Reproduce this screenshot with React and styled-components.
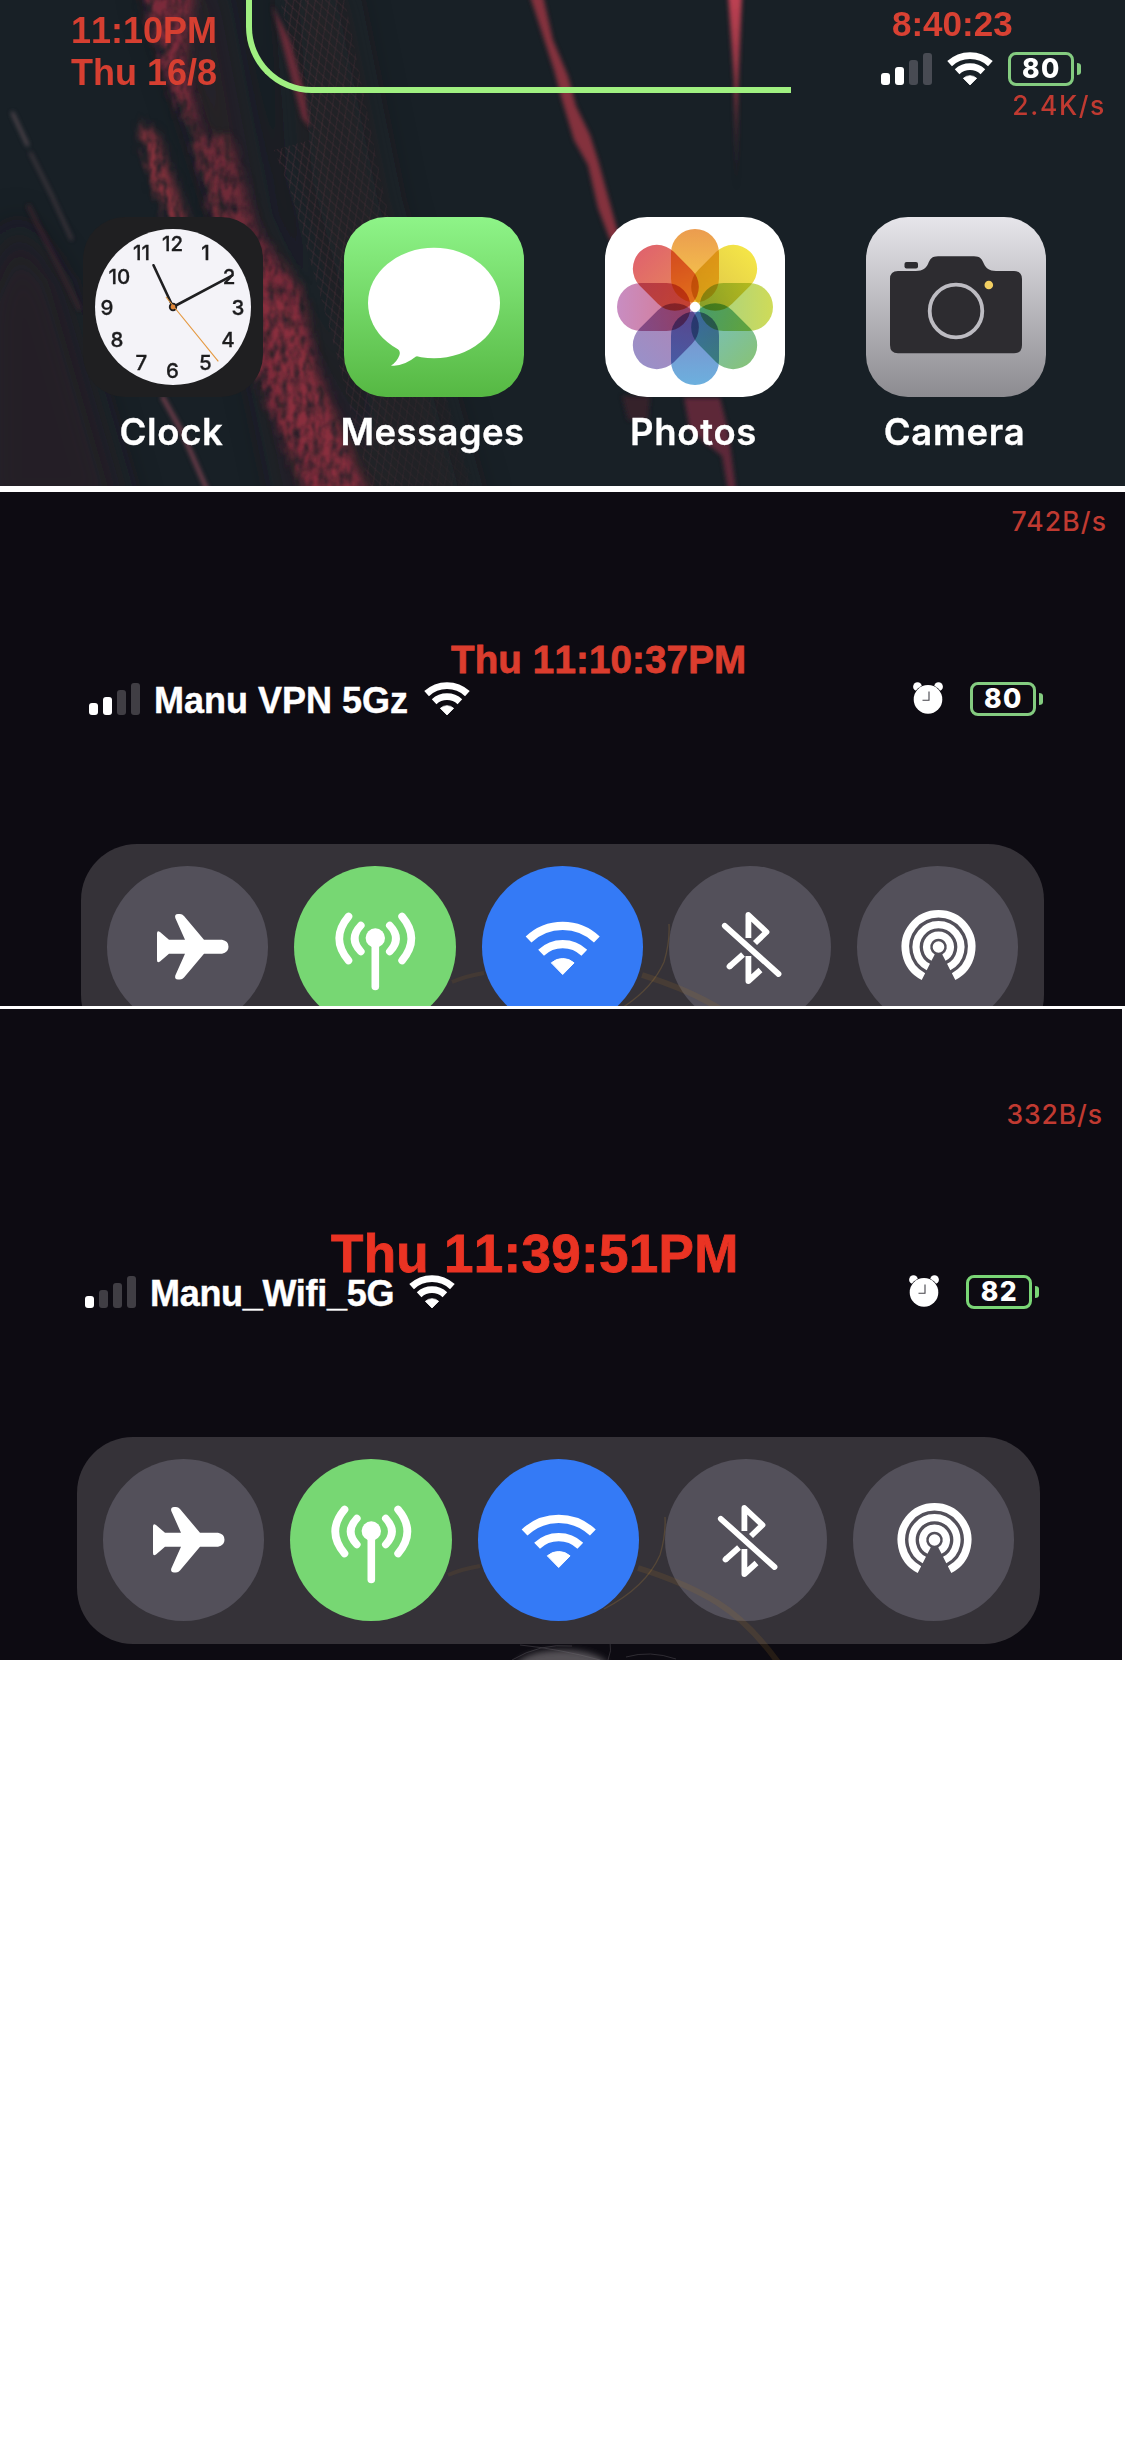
import React from "react";
import styled, { createGlobalStyle } from "styled-components";

const GlobalStyle = createGlobalStyle`
  html, body { margin: 0; padding: 0; background: #ffffff; }
  * { box-sizing: border-box; }
`;

const SANS = `"Liberation Sans", Arial, sans-serif`;
const UI = `Inter, "Noto Sans", sans-serif`;

const Page = styled.main`
  width: 1125px;
  min-height: 2440px;
  display: flex;
  flex-direction: column;
  background: #ffffff;
  font-kerning: none;
`;

const Screen = styled.section`
  position: relative;
  isolation: isolate;
  overflow: hidden;
  width: ${(p) => p.$width}px;
  height: ${(p) => p.$height}px;
  margin-bottom: ${(p) => p.$after || 0}px;
  background: ${(p) => p.$bg};
`;

const Backdrop = styled.svg`
  position: absolute;
  inset: 0;
  z-index: -1;
  display: block;
`;

const TopBar = styled.header`
  display: flex;
  align-items: flex-start;
  height: 217px;
`;

const DateBlock = styled.div`
  width: 246px;
  padding: 10px 0 0 42px;
  text-align: center;
  font: 700 36px/42px ${SANS};
  font-kerning: none;
  color: #d63f31;
`;

const DateLine = styled.div`
  width: 204px;
`;

const NotchOutline = styled.div`
  width: 545px;
  height: 93px;
  border: solid #a0f081;
  border-width: 0 0 6px 6px;
  border-bottom-left-radius: 66px;
`;

const StatusCorner = styled.div`
  flex: 1;
  display: flex;
  flex-direction: column;
  padding: 4px 20px 0 90px;
`;

const CornerTime = styled.div`
  height: 40px;
  padding-left: 11px;
  font: 700 35px/40px ${SANS};
  color: #d84133;
`;

const CornerIcons = styled.div`
  display: flex;
  align-items: flex-start;
  margin-top: 8px;
  height: 34px;
`;

const Gap = styled.span`
  flex: 0 0 ${(p) => p.$w}px;
`;

const Rate = styled.div`
  align-self: flex-end;
  height: 26px;
  margin-top: ${(p) => p.$top}px;
  margin-right: ${(p) => p.$right || 0}px;
  font: 500 26.5px/26px ${UI};
  letter-spacing: ${(p) => p.$spacing}px;
  color: #c03a31;
  white-space: nowrap;
`;

const Bars = styled.div`
  flex: none;
  display: flex;
  align-items: flex-end;
  gap: 5px;
  height: 33px;
`;

const Bar = styled.i`
  width: 9px;
  height: ${(p) => p.$h}px;
  border-radius: 3px;
  background: ${(p) => (p.$on ? "#ffffff" : p.$dim)};
`;

const Battery = styled.div`
  flex: none;
  display: flex;
  align-items: center;
  height: 34px;
`;

const BatteryCase = styled.div`
  width: 66px;
  height: 34px;
  border: 3px solid ${(p) => p.$color};
  border-radius: 8px;
  text-align: center;
  font: 800 26.5px/27px ${UI};
  letter-spacing: 1.6px;
  text-indent: 1px;
  color: #ffffff;
`;

const BatteryNub = styled.i`
  width: 4px;
  height: 12px;
  margin-left: 3px;
  border-radius: 0 8px 8px 0 / 0 6px 6px 0;
  background: ${(p) => p.$color};
`;

const Glyph = styled.svg`
  display: block;
  flex: none;
  overflow: visible;
`;

const Dock = styled.div`
  display: grid;
  grid-template-columns: repeat(4, 180px);
  column-gap: 81px;
  padding-left: 83px;
`;

const DockApp = styled.div`
  display: flex;
  flex-direction: column;
  align-items: center;
`;

const AppName = styled.span`
  margin-top: 14px;
  margin-left: -3px;
  font: 600 36.5px/42px ${UI};
  letter-spacing: ${(p) => p.$spacing || 0.7}px;
  -webkit-text-stroke: 0.3px #ffffff;
  white-space: nowrap;
  color: #ffffff;
`;

const CenterColumn = styled.div`
  display: flex;
  flex-direction: column;
`;

const BigTime = styled.div`
  margin-top: ${(p) => p.$top}px;
  margin-left: ${(p) => p.$left}px;
  height: ${(p) => p.$lh}px;
  font: 700 ${(p) => p.$size}px/${(p) => p.$lh}px ${SANS};
  font-kerning: none;
  letter-spacing: ${(p) => p.$spacing || 0}px;
  -webkit-text-stroke: 0.8px ${(p) => p.$color};
  color: ${(p) => p.$color};
  white-space: nowrap;
`;

const StatusRow = styled.div`
  display: flex;
  align-items: flex-start;
  height: 34px;
  margin-top: ${(p) => p.$top}px;
  padding-left: ${(p) => p.$left}px;
`;

const NetworkName = styled.div`
  flex: none;
  width: ${(p) => p.$w}px;
  padding-left: 1px;
  margin-left: 13px;
  font: 700 36px/37px ${SANS};
  letter-spacing: ${(p) => p.$spacing || 0}px;
  -webkit-text-stroke: 0.4px #ffffff;
  color: #ffffff;
  white-space: nowrap;
`;

const Tile = styled.div`
  display: flex;
  gap: 26px;
  width: 963px;
  height: 207px;
  margin: 128px 0 0 ${(p) => p.$left}px;
  padding: 22px 25.5px;
  border-radius: 56px;
  background: #353238;
`;

const Toggle = styled.div`
  flex: none;
  width: 161.5px;
  height: 162px;
  border-radius: 50%;
  background: ${(p) => p.$color};
`;

const Strands = styled.svg`
  position: absolute;
  inset: 0;
  display: block;
`;

function Signal({ on, dim }) {
  return (
    <Bars>
      {[12, 18, 25, 32].map((h, i) => (
        <Bar key={h} $h={h} $on={i < on} $dim={dim} />
      ))}
    </Bars>
  );
}

function wedge(cx, cy, r, deg) {
  const a = (deg * Math.PI) / 180;
  const dx = r * Math.sin(a);
  const dy = r * Math.cos(a);
  return `${cx - dx} ${cy - dy} A${r} ${r} 0 0 1 ${cx + dx} ${cy - dy}`;
}

function Wifi() {
  return (
    <Glyph width="46" height="34" viewBox="0 0 46 34">
      <g fill="none" stroke="#fff">
        <path d={`M${wedge(23, 33.5, 29.9, 43)}`} strokeWidth="6.9" />
        <path d={`M${wedge(23, 33.5, 18.9, 43)}`} strokeWidth="6.8" />
      </g>
      <path
        d={`M23 33 L${wedge(23, 33.5, 9.8, 43)} Z`}
        fill="#fff"
        stroke="#fff"
        strokeWidth=".8"
        strokeLinejoin="round"
      />
    </Glyph>
  );
}

function Alarm() {
  return (
    <Glyph width="30" height="32" viewBox="0 0 30 32">
      <circle cx="4.500" cy="4.700" r="4.400" fill="#fff" />
      <circle cx="25.500" cy="4.700" r="4.400" fill="#fff" />
      <circle cx="15" cy="17.300" r="14.900" fill="#0d0b12" />
      <circle cx="15" cy="17.400" r="14.300" fill="#fff" />
      <path d="M16 9.500V18.300H9.500" fill="none" stroke="#44434a" strokeWidth="1.100" />
    </Glyph>
  );
}

function BatteryLevel({ level, color = "#84cc80" }) {
  return (
    <Battery>
      <BatteryCase $color={color}>{level}</BatteryCase>
      <BatteryNub $color={color} />
    </Battery>
  );
}

const numerals = [
  [12, 88.5, 26.7], [1, 121.4, 35.7], [2, 145, 59.7], [3, 153.9, 90],
  [4, 144, 122], [5, 121.4, 145], [6, 88.5, 153.7], [7, 57.4, 145],
  [8, 33, 122], [9, 23, 90], [10, 35.3, 59.7], [11, 57.4, 35.7],
];

function ClockIcon() {
  return (
    <Glyph width="180" height="180" viewBox="0 0 180 180">
      <rect width="180" height="180" rx="42" fill="#1f1f21" />
      <circle cx="90" cy="90" r="78" fill="#f4f3f8" />
      <g fontFamily="Inter, sans-serif" fontSize="20.500" fontWeight="500" fill="#1c1c1e" stroke="#1c1c1e" strokeWidth=".3" textAnchor="middle">
        {numerals.map(([n, x, y]) => (
          <text key={n} x={x + 1} y={y + 7.5}>{n}</text>
        ))}
      </g>
      <g stroke="#1f1f21" strokeLinecap="round">
        <path d="M90 90L70.500 48.300" strokeWidth="2.600" />
        <path d="M90 90L149.400 58.400" strokeWidth="2.600" />
      </g>
      <circle cx="90" cy="90" r="4.200" fill="#1f1f21" />
      <path d="M83 80L135.300 144.300" stroke="#e5983f" strokeWidth="1.100" />
      <circle cx="90" cy="90" r="2.400" fill="#e0873a" />
    </Glyph>
  );
}

function MessagesIcon() {
  return (
    <Glyph width="180" height="180" viewBox="0 0 180 180">
      <defs>
        <linearGradient id="msg" x1="0" y1="0" x2="0" y2="1">
          <stop offset="0" stopColor="#8ef488" />
          <stop offset="1" stopColor="#56b843" />
        </linearGradient>
      </defs>
      <rect width="180" height="180" rx="42" fill="url(#msg)" />
      <ellipse cx="90" cy="86" rx="66" ry="55.300" fill="#fff" />
      <path d="M52 130Q57 134 55.500 138Q53 145 47 148.500Q59 150 72 139.600Q80 137 80 132L60 122Z" fill="#fff" />
    </Glyph>
  );
}

const petals = [
  ["#eb9c4f", "#f8d04b"], ["#f4e547", "#dcc24a"], ["#cfdb58", "#9fd08c"],
  ["#86c27c", "#74bfc8"], ["#6cb0de", "#8087c8"], ["#9a90c8", "#b184b4"],
  ["#c88dc2", "#d8788c"], ["#e0646c", "#e88a58"],
];

function PhotosIcon() {
  return (
    <Glyph width="180" height="180" viewBox="0 0 180 180">
      <defs>
        {petals.map(([a, b], i) => (
          <linearGradient key={i} id={`petal${i}`} x1="0" y1="0" x2="0" y2="1">
            <stop offset="0" stopColor={a} />
            <stop offset="1" stopColor={b} />
          </linearGradient>
        ))}
      </defs>
      <rect width="180" height="180" rx="42" fill="#fff" />
      <g style={{ isolation: "isolate" }}>
        {petals.map((_, i) => (
          <rect
            key={i}
            x="66" y="12" width="48" height="73.500" rx="24"
            fill={`url(#petal${i})`}
            transform={`rotate(${i * 45} 90 90)`}
            style={{ mixBlendMode: "multiply" }}
          />
        ))}
      </g>
      <circle cx="90" cy="90" r="5" fill="#fff" />
    </Glyph>
  );
}

function CameraIcon() {
  return (
    <Glyph width="180" height="180" viewBox="0 0 180 180">
      <defs>
        <linearGradient id="cam" x1="0" y1="0" x2="0" y2="1">
          <stop offset="0" stopColor="#e6e5ea" />
          <stop offset="1" stopColor="#8c8b90" />
        </linearGradient>
      </defs>
      <rect width="180" height="180" rx="42" fill="url(#cam)" />
      <rect x="38.500" y="45" width="13.500" height="6.400" rx="2" fill="#2d2c30" />
      <path
        d="M32 54H50C57 54 60 51 62 47C64 42 66 39.300 72 39.300H108C114 39.300 116 42 118 47C120 51 123 54 130 54H148Q156 54 156 62V128Q156 136.300 148 136.300H32Q24 136.300 24 128V62Q24 54 32 54Z"
        fill="#2d2c30"
      />
      <circle cx="90" cy="94" r="26.300" fill="none" stroke="#bdbcc2" strokeWidth="3.800" />
      <circle cx="122.800" cy="68" r="4.300" fill="#f2cf62" />
    </Glyph>
  );
}

function AirplaneGlyph() {
  return (
    <Glyph width="162" height="162" viewBox="0 0 162 162">
      <path
        d="M53 66L62 73.800H78L68.300 52Q67.300 48.200 71 48H73Q75.300 48 77 50L97 73.800H115Q121.500 75 121.500 80.800T115 87.800H97L77 111.500Q75.300 113.600 73 113.600H71Q67.300 113.400 68.300 109.600L78 87.800H62L53 95.600Q50 97.500 50 94V67.600Q50 64 53 66Z"
        fill="#fff"
      />
    </Glyph>
  );
}

function AntennaGlyph() {
  return (
    <Glyph width="162" height="162" viewBox="0 0 162 162">
      <circle cx="81.300" cy="72" r="9.700" fill="#fff" />
      <g fill="none" stroke="#fff" strokeWidth="7.600" strokeLinecap="round">
        <path d="M81.300 76V120.500" />
        <path d="M66.800 59.500Q54.500 72.500 66.800 85.500" />
        <path d="M95.800 59.500Q108.100 72.500 95.800 85.500" />
        <path d="M54.500 50.500Q36 72.500 54.500 94.500" />
        <path d="M108.100 50.500Q126.600 72.500 108.100 94.500" />
      </g>
    </Glyph>
  );
}

function WifiGlyph() {
  return (
    <Glyph width="162" height="162" viewBox="0 0 162 162">
      <g fill="none" stroke="#fff">
        <path d={`M${wedge(80.7, 109.5, 49.6, 43.5)}`} strokeWidth="8.400" />
        <path d={`M${wedge(80.7, 109.5, 31.4, 43.5)}`} strokeWidth="8.400" />
      </g>
      <path
        d={`M80.700 108.500L${wedge(80.7, 109.5, 17, 42)}Z`}
        fill="#fff"
        stroke="#fff"
        strokeWidth="1"
        strokeLinejoin="round"
      />
    </Glyph>
  );
}

function BluetoothOffGlyph() {
  return (
    <Glyph width="162" height="162" viewBox="0 0 162 162">
      <g fill="none" stroke="#fff" strokeWidth="5.800" strokeLinejoin="round">
        <path d="M79.400 72V49L97.500 66L86 77" />
        <path d="M79.400 90V115L91.500 104" />
        <path d="M60.500 100.500L74 88.500" />
        <path d="M60.500 100.500L61 100" strokeLinecap="round" />
        <path d="M55.800 59.800L109.500 108" strokeLinecap="round" />
      </g>
    </Glyph>
  );
}

function arcGap(r) {
  const a = (27 * Math.PI) / 180;
  const x = r * Math.sin(a);
  const y = r * Math.cos(a);
  return `M${81.5 - x} ${81 + y}A${r} ${r} 0 1 1 ${81.5 + x} ${81 + y}`;
}

function AirDropGlyph() {
  return (
    <Glyph width="162" height="162" viewBox="0 0 162 162">
      <circle cx="81.500" cy="81" r="5.800" fill="#fff" />
      <g fill="none" stroke="#fff">
        <path d={arcGap(11.9)} strokeWidth="7.200" />
        <path d={arcGap(22.4)} strokeWidth="7.200" />
        <path d={arcGap(33.2)} strokeWidth="7.600" />
      </g>
    </Glyph>
  );
}

function ControlTile({ left }) {
  return (
    <Tile $left={left}>
      <Toggle $color="#53505a"><AirplaneGlyph /></Toggle>
      <Toggle $color="#77d773"><AntennaGlyph /></Toggle>
      <Toggle $color="#347af6"><WifiGlyph /></Toggle>
      <Toggle $color="#53505a"><BluetoothOffGlyph /></Toggle>
      <Toggle $color="#53505a"><AirDropGlyph /></Toggle>
    </Tile>
  );
}

function Wallpaper() {
  return (
    <Backdrop width="1125" height="486" viewBox="0 0 1125 486">
      <defs>
        <filter id="rough" filterUnits="userSpaceOnUse" x="80" y="-40" width="360" height="580">
          <feGaussianBlur in="SourceGraphic" stdDeviation="5" result="s" />
          <feTurbulence type="fractalNoise" baseFrequency="0.16 0.07" numOctaves="4" seed="11" result="n" />
          <feDisplacementMap in="s" in2="n" scale="12" xChannelSelector="R" yChannelSelector="G" result="d" />
          <feColorMatrix in="n" type="matrix" values="0 0 0 0 0  0 0 0 0 0  0 0 0 0 0  2 0 0 0 -0.300" result="m" />
          <feComposite in="d" in2="m" operator="in" />
          <feGaussianBlur stdDeviation="0.900" />
        </filter>
        <filter id="soft" filterUnits="userSpaceOnUse" x="-40" y="-40" width="1205" height="580"><feGaussianBlur stdDeviation="2" /></filter>
        <filter id="haze" filterUnits="userSpaceOnUse" x="-80" y="-80" width="1285" height="660"><feGaussianBlur stdDeviation="18" /></filter>
        <pattern id="mesh" width="8" height="15" patternUnits="userSpaceOnUse" patternTransform="rotate(-18)">
          <path d="M0 0L8 15M8 0L0 15" stroke="#80414f" strokeWidth="1" fill="none" />
        </pattern>
        <linearGradient id="needle" x1="0" y1="0" x2="0" y2="1">
          <stop offset="0" stopColor="#c04153" />
          <stop offset="0.500" stopColor="#85323f" />
          <stop offset="1" stopColor="#3a222c" stopOpacity="0" />
        </linearGradient>
        <linearGradient id="meshFade" x1="0" y1="0" x2="1" y2="0">
          <stop offset="0" stopColor="#fff" />
          <stop offset="1" stopColor="#fff" stopOpacity="0.150" />
        </linearGradient>
        <mask id="meshMask" maskUnits="userSpaceOnUse" x="260" y="0" width="220" height="486">
          <rect x="260" width="220" height="486" fill="url(#meshFade)" />
        </mask>
      </defs>
      <rect width="1125" height="486" fill="#182026" />
      <g filter="url(#haze)">
        <path d="M15 220L60 280L130 520H-20V300Z" fill="#2f1f28" opacity=".6" />
        <path d="M150 -20H215L260 215L390 520H290L230 230Z" fill="#35202a" opacity=".5" />
        <path d="M285 -20H345L390 200L480 520H390L300 180Z" fill="#33202a" opacity=".4" />
      </g>
      <path d="M280 0H345L385 200L475 486H370L330 330L290 190L274 150L310 140Z" fill="url(#mesh)" opacity=".34" mask="url(#meshMask)" />
      <g filter="url(#rough)">
        <path d="M142 -10H196L186 60L202 132L180 110L160 55Z" fill="#7c2c3a" />
        <path d="M140 122L158 135L190 226H172L152 180Z" fill="#8c303c" />
        <path d="M192 130L232 140L258 232H216Z" fill="#702a37" />
        <path d="M252 222L272 250L302 290L318 370L372 500H310L280 430L256 370Z" fill="#802c3b" />
        <path d="M264 290L298 310L322 400L362 496H332L284 410Z" fill="#8c3040" opacity=".8" />
      </g>
      <g filter="url(#soft)">
        <path d="M272 5L290 40L304 90L310 128L302 118L288 66Z" fill="#682b38" />
        <path d="M530 -4H543L553 40L568 76L576 106L590 135L598 160L620 240H610L598 208L588 165L574 140L562 100L554 70Z" fill="#84303e" />
        <path d="M728 -6H742L738 90L737 190H736L734 80Z" fill="url(#needle)" />
        <path d="M684 398H720L728 430L736 490H728L722 456L690 430Z" fill="#65293a" opacity=".9" />
        <path d="M622 396H650L648 420H628Z" fill="#35212a" />
        <path d="M12 112L28 146" fill="none" stroke="#6d5960" strokeWidth="3" opacity=".75" />
        <path d="M30 152L50 192L72 240" fill="none" stroke="#5c464e" strokeWidth="2.500" opacity=".75" />
        <path d="M162 396L182 432L208 492" fill="none" stroke="#75404d" strokeWidth="4" />
        <path d="M28 205L80 310" fill="none" stroke="#45252f" strokeWidth="4" opacity=".7" />
      </g>
    </Backdrop>
  );
}

function DimStrands({ width, height, dx, dy }) {
  return (
    <Strands width={width} height={height} viewBox={`0 0 ${width} ${height}`}>
      <g transform={`translate(${dx} ${dy})`} fill="none">
        <path d="M452 490Q466 484 484 481" stroke="#a06a20" strokeWidth="4" opacity=".13" />
        <path d="M642 483Q690 498 722 518T784 580" stroke="#a87428" strokeWidth="6" opacity=".16" />
        <path d="M669 432Q670 450 664 470Q650 502 608 524" stroke="#c79238" strokeWidth="1.300" opacity=".22" />
      </g>
    </Strands>
  );
}

function FurTuft() {
  return (
    <Backdrop width="1122" height="651" viewBox="0 0 1122 651">
      <defs>
        <filter id="fur" x="-10%" y="-60%" width="120%" height="220%"><feGaussianBlur stdDeviation="3" /></filter>
      </defs>
      <ellipse cx="562" cy="658" rx="46" ry="17" fill="#545156" filter="url(#fur)" />
      <g fill="none" stroke="#77747a" strokeWidth=".8" opacity=".4">
        <path d="M512 651Q540 634 572 637" />
        <path d="M520 636Q560 640 600 651" />
        <path d="M608 651Q612 642 610 632" />
        <path d="M626 648Q650 641 676 650" />
      </g>
    </Backdrop>
  );
}

export default function App() {
  return (
    <>
      <GlobalStyle />
      <Page>
        <Screen $width={1125} $height={486} $after={6} $bg="#182026">
          <Wallpaper />
          <TopBar>
            <DateBlock>
              <DateLine>11:10PM</DateLine>
              <DateLine>Thu 16/8</DateLine>
            </DateBlock>
            <NotchOutline />
            <StatusCorner>
              <CornerTime>8:40:23</CornerTime>
              <CornerIcons>
                <Signal on={2} dim="#484b53" />
                <Gap $w={15} />
                <Wifi />
                <Gap $w={15} />
                <BatteryLevel level="80" />
              </CornerIcons>
              <Rate $top={6} $right={-1} $spacing={1.6}>2.4K/s</Rate>
            </StatusCorner>
          </TopBar>
          <Dock>
            <DockApp><ClockIcon /><AppName>Clock</AppName></DockApp>
            <DockApp><MessagesIcon /><AppName $spacing={0.4}>Messages</AppName></DockApp>
            <DockApp><PhotosIcon /><AppName>Photos</AppName></DockApp>
            <DockApp><CameraIcon /><AppName>Camera</AppName></DockApp>
          </Dock>
        </Screen>

        <Screen $width={1125} $height={514} $after={3} $bg="#0d0b12">
          <CenterColumn>
            <Rate $top={16} $right={18} $spacing={1.1}>742B/s</Rate>
            <BigTime $top={105.5} $left={451} $lh={40} $size={38.5} $spacing={0.15} $color="#db3d2e">Thu 11:10:37PM</BigTime>
            <StatusRow $top={2.5} $left={89}>
              <Signal on={2} dim="#403e44" />
              <NetworkName $w={271}>Manu VPN 5Gz</NetworkName>
              <Wifi />
              <Gap $w={443} />
              <Alarm />
              <Gap $w={27} />
              <BatteryLevel level="80" />
            </StatusRow>
            <ControlTile left={81} />
          </CenterColumn>
          <DimStrands width={1125} height={514} dx={0} dy={0} />
        </Screen>

        <Screen $width={1122} $height={651} $bg="#0d0b12">
          <FurTuft />
          <CenterColumn>
            <Rate $top={92} $right={19} $spacing={0.9}>332B/s</Rate>
            <BigTime $top={105.5} $left={331} $lh={42} $size={53} $spacing={0.3} $color="#ea3323">Thu 11:39:51PM</BigTime>
            <StatusRow $top={0.5} $left={85}>
              <Signal on={1} dim="#403e44" />
              <NetworkName $w={260} $spacing={-0.3}>Manu_Wifi_5G</NetworkName>
              <Wifi />
              <Gap $w={454} />
              <Alarm />
              <Gap $w={27} />
              <BatteryLevel level="82" color="#7ad676" />
            </StatusRow>
            <ControlTile left={77} />
          </CenterColumn>
          <DimStrands width={1122} height={651} dx={-4} dy={76} />
        </Screen>
      </Page>
    </>
  );
}
